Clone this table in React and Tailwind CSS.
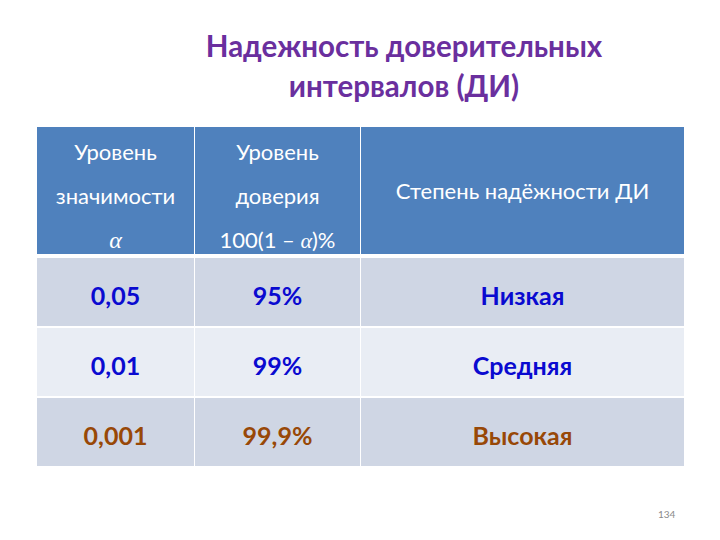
export default function App() {
  const rows = [
    { a: "0,05", b: "95%", c: "Низкая", bg: "bg-[#cfd6e4]", color: "text-[#0a0ad0]" },
    { a: "0,01", b: "99%", c: "Средняя", bg: "bg-[#e9edf4]", color: "text-[#0a0ad0]" },
    { a: "0,001", b: "99,9%", c: "Высокая", bg: "bg-[#cfd6e4]", color: "text-[#984807]" },
  ];
  return (
    <div className="w-[720px] h-[540px] bg-white relative" style={{ fontFamily: "Lato, 'Open Sans', sans-serif" }}>
      <div className="pt-[26px] pl-[88px] text-center text-[#6a2f9e] font-bold text-[29.5px] leading-[40px]">
        <div>Надежность доверительных</div>
        <div>интервалов (ДИ)</div>
      </div>
      <div className="ml-[37px] mt-[21px] w-[647px]">
        <div className="flex bg-[#4f81bd] h-[127px] text-white text-[22px] overflow-hidden">
          <div className="w-[158px] border-r border-white flex flex-col items-center leading-[44px] pt-[3px]">
            <div>Уровень</div>
            <div>значимости</div>
            <div className="italic text-[24px]" style={{ fontFamily: "'Liberation Serif', serif" }}>α</div>
          </div>
          <div className="w-[166px] border-r border-white flex flex-col items-center leading-[44px] pt-[3px]">
            <div>Уровень</div>
            <div>доверия</div>
            <div>100(1 – <span className="italic" style={{ fontFamily: "'Liberation Serif', serif" }}>α</span>)%</div>
          </div>
          <div className="flex-1 flex items-center justify-center">Степень надёжности ДИ</div>
        </div>
        <div className="h-[4px]" />
        {rows.map((r, i) => (
          <div key={i} className={`flex ${r.bg} h-[68px] ${i > 0 ? "mt-[2px]" : ""} ${r.color} font-bold text-[25px]`}>
            <div className="w-[158px] border-r border-white flex items-center justify-center pt-[8px]">{r.a}</div>
            <div className="w-[166px] border-r border-white flex items-center justify-center pt-[8px]">{r.b}</div>
            <div className="flex-1 flex items-center justify-center pt-[8px]">{r.c}</div>
          </div>
        ))}
      </div>
      <div className="absolute left-[658px] top-[507px] text-[10px] text-[#8a8a8a]">134</div>
    </div>
  );
}
